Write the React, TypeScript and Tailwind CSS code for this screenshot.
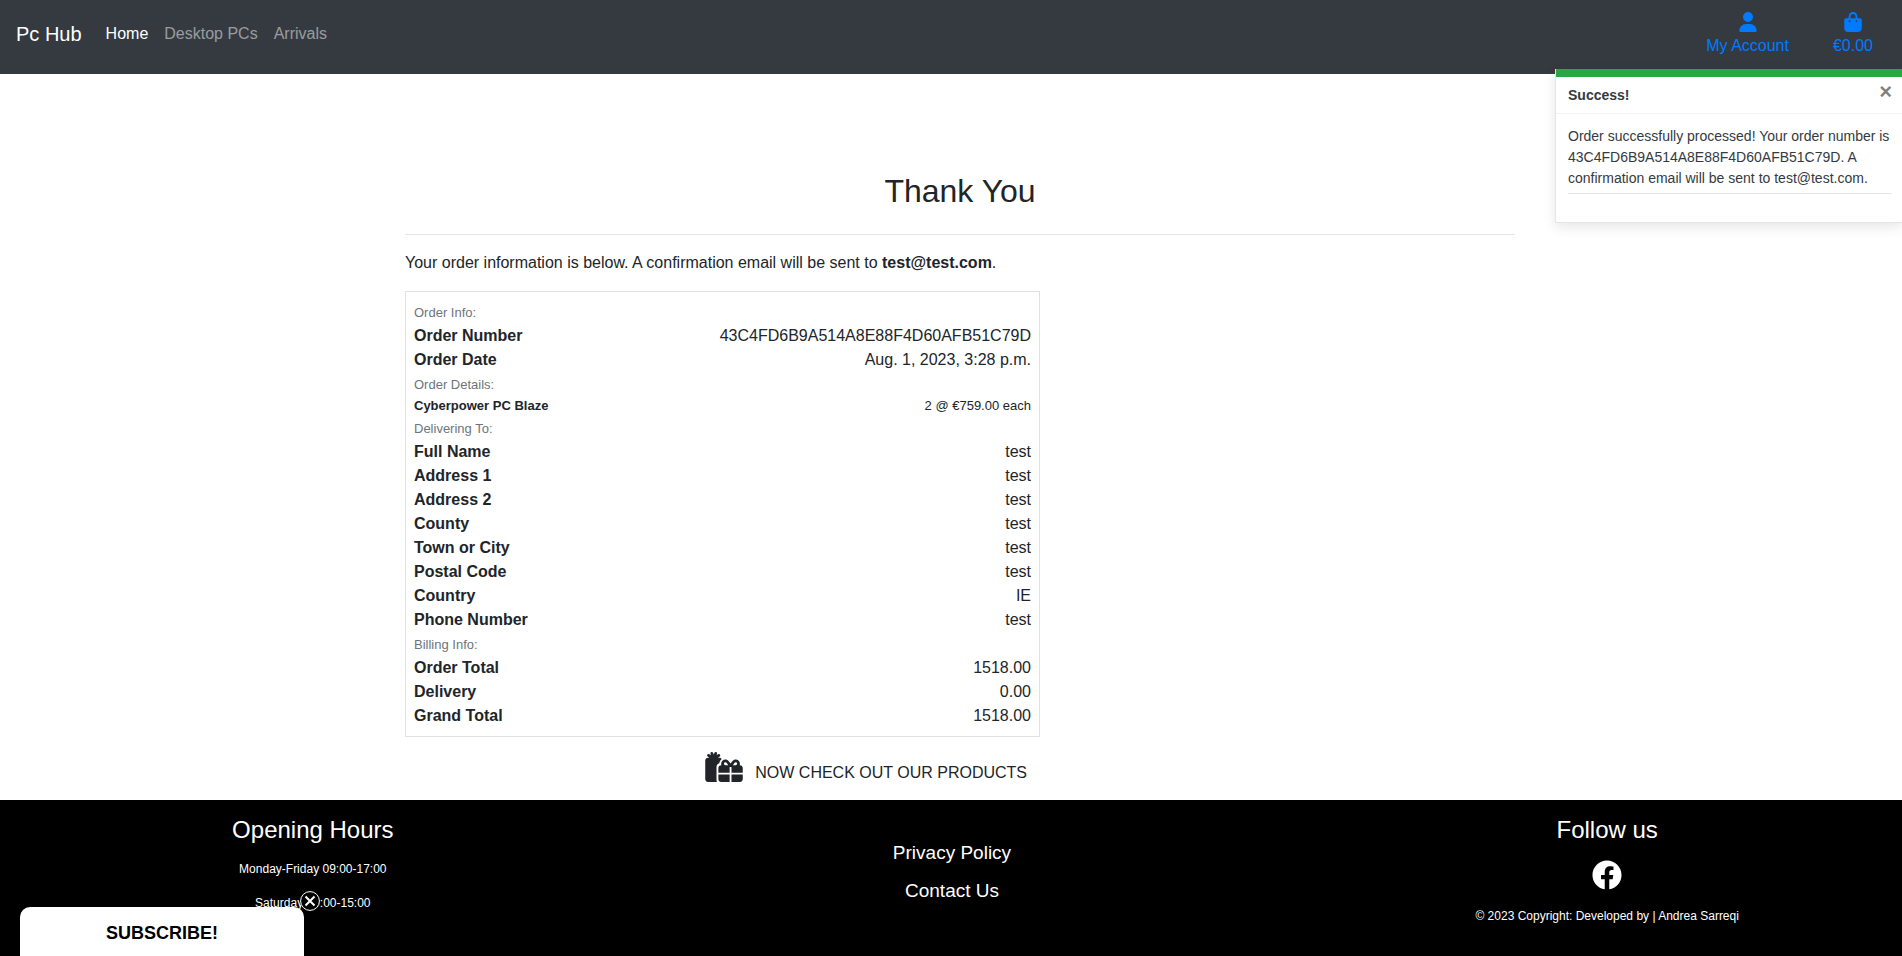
import React from "react";
import { FaBagShopping, FaGifts, FaUser } from "react-icons/fa6";
import { FaFacebook } from "react-icons/fa";

type Row = { label: string; value: string; small?: boolean };
type Group = { title: string; rows: Row[] };

const groups: Group[] = [
  {
    title: "Order Info:",
    rows: [
      { label: "Order Number", value: "43C4FD6B9A514A8E88F4D60AFB51C79D" },
      { label: "Order Date", value: "Aug. 1, 2023, 3:28 p.m." },
    ],
  },
  {
    title: "Order Details:",
    rows: [{ label: "Cyberpower PC Blaze", value: "2 @ €759.00 each", small: true }],
  },
  {
    title: "Delivering To:",
    rows: [
      { label: "Full Name", value: "test" },
      { label: "Address 1", value: "test" },
      { label: "Address 2", value: "test" },
      { label: "County", value: "test" },
      { label: "Town or City", value: "test" },
      { label: "Postal Code", value: "test" },
      { label: "Country", value: "IE" },
      { label: "Phone Number", value: "test" },
    ],
  },
  {
    title: "Billing Info:",
    rows: [
      { label: "Order Total", value: "1518.00" },
      { label: "Delivery", value: "0.00" },
      { label: "Grand Total", value: "1518.00" },
    ],
  },
];

function Navbar() {
  return (
    <header className="flex h-[74px] items-start justify-between bg-[#343a40] pr-[29px]">
      <nav className="flex items-center pt-3.5 pl-4">
        <a href="#" className="mr-4 text-xl leading-10 text-white">
          Pc Hub
        </a>
        <a href="#" className="px-2 text-white">
          Home
        </a>
        <a href="#" className="px-2 text-white/50">
          Desktop PCs
        </a>
        <a href="#" className="px-2 text-white/50">
          Arrivals
        </a>
      </nav>
      <div className="flex gap-11 pt-3 text-[#007bff]">
        <a href="#" className="flex flex-col items-center gap-0.5">
          <FaUser className="size-5" />
          <span>My Account</span>
        </a>
        <a href="#" className="flex flex-col items-center gap-0.5">
          <FaBagShopping className="size-5" />
          <span>€0.00</span>
        </a>
      </div>
    </header>
  );
}

function Toast() {
  return (
    <div
      role="status"
      className="absolute top-[69px] right-0 w-[347px] border-l border-b border-black/10 bg-white text-sm shadow-[0_4px_12px_rgba(0,0,0,0.1)]"
    >
      <div className="h-2 bg-[#28a745]" />
      <div className="flex h-[37px] items-center justify-between border-b border-black/5 pr-2.5 pl-3">
        <strong className="text-[#343a40]">Success!</strong>
        <button
          type="button"
          aria-label="Close"
          className="pb-1.5 text-[22px] leading-5 font-bold text-black/50"
        >
          ×
        </button>
      </div>
      <div className="pt-3 pr-2.5 pb-7 pl-3 text-[#343a40]">
        <p className="border-b border-black/10 pb-1 leading-[21px]">
          Order successfully processed! Your order number is 43C4FD6B9A514A8E88F4D60AFB51C79D. A
          confirmation email will be sent to test@test.com.
        </p>
      </div>
    </div>
  );
}

function OrderSummary() {
  return (
    <div className="border border-[#dee2e6] p-2">
      {groups.map((group) => (
        <section key={group.title}>
          <h2 className="pt-0.5 text-[13px] leading-[22px] text-[#6c757d]">{group.title}</h2>
          <dl>
            {group.rows.map((row) => (
              <div
                key={row.label}
                className={
                  row.small
                    ? "flex justify-between text-[13px] leading-5"
                    : "flex justify-between leading-6"
                }
              >
                <dt className="font-bold">{row.label}</dt>
                <dd>{row.value}</dd>
              </div>
            ))}
          </dl>
        </section>
      ))}
    </div>
  );
}

function Footer() {
  return (
    <footer className="grid flex-1 grid-cols-[33fr_34fr_33fr] bg-black pt-4 text-center text-white">
      <div className="pr-0.5">
        <h2 className="text-2xl leading-7">Opening Hours</h2>
        <p className="mt-4 text-xs leading-[18px]">Monday-Friday 09:00-17:00</p>
        <p className="mt-4 text-xs leading-[18px]">Saturday 09:00-15:00</p>
      </div>
      <div className="flex flex-col items-center gap-2.5 pt-[23px] pl-0.5 text-[19px] leading-7">
        <a href="#">Privacy Policy</a>
        <a href="#">Contact Us</a>
      </div>
      <div className="flex flex-col items-center pl-[38px]">
        <h2 className="text-2xl leading-7">Follow us</h2>
        <a href="#" aria-label="Facebook" className="mt-4">
          <FaFacebook className="size-[30px]" />
        </a>
        <p className="mt-[17px] text-xs leading-[18px]">
          © 2023 Copyright: Developed by | Andrea Sarreqi
        </p>
      </div>
    </footer>
  );
}

function SubscribeTab() {
  return (
    <div className="fixed bottom-0 left-5 w-[284px]">
      <button
        type="button"
        className="h-[49px] w-full rounded-t-[10px] bg-white pt-0.5 text-lg font-bold text-black"
      >
        SUBSCRIBE!
      </button>
      <button
        type="button"
        aria-label="Dismiss"
        className="absolute -top-4 -right-4 size-5 rounded-full bg-black text-white"
      >
        <svg viewBox="0 0 20 20" className="size-5" fill="none" stroke="currentColor">
          <circle cx="10" cy="10" r="9.4" strokeWidth="1" />
          <path d="M5.5 5.5l9 9M14.5 5.5l-9 9" strokeWidth="2" />
        </svg>
      </button>
    </div>
  );
}

export default function App() {
  return (
    <div className="relative flex min-h-screen flex-col bg-white font-['Liberation_Sans',Arial,sans-serif] text-base text-[#212529]">
      <Navbar />
      <Toast />
      <main className="pt-[97px] pb-[15px] pl-[18px]">
        <div className="mx-auto max-w-[1110px]">
          <h1 className="text-center text-[32px] leading-10">Thank You</h1>
          <hr className="mt-[23px] border-black/10" />
          <p className="mt-4 leading-6">
            Your order information is below. A confirmation email will be sent to{" "}
            <strong>test@test.com</strong>.
          </p>
          <div className="mt-4 max-w-[635px]">
            <OrderSummary />
            <div className="mt-[15px] flex justify-end pr-[13px]">
              <a href="#" className="flex items-start gap-3">
                <FaGifts className="h-[30px] w-[38px]" />
                <span className="pt-[9px] leading-6">NOW CHECK OUT OUR PRODUCTS</span>
              </a>
            </div>
          </div>
        </div>
      </main>
      <Footer />
      <SubscribeTab />
    </div>
  );
}
